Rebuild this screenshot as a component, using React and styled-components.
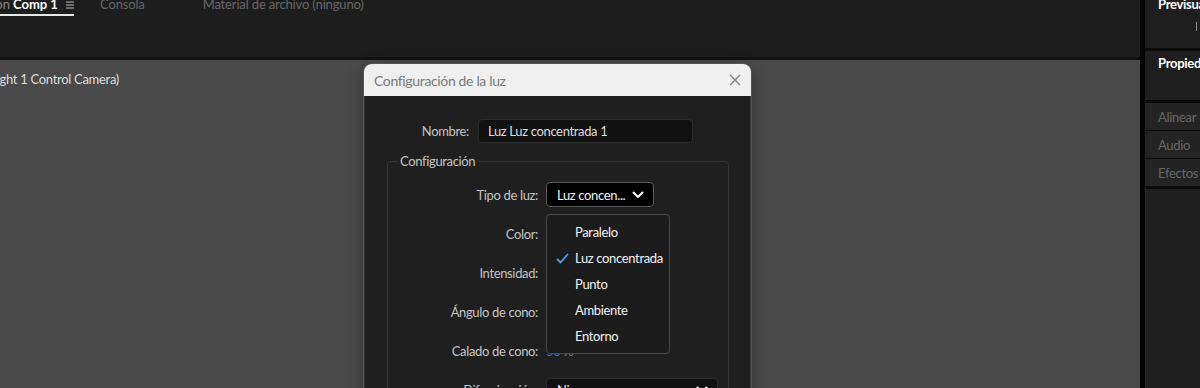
import React from "react";
import styled, { createGlobalStyle } from "styled-components";

const Global = createGlobalStyle`
  html, body {
    margin: 0;
    padding: 0;
    background: #000;
    overflow: hidden;
  }
  body {
    font-family: Lato, "Noto Sans", "Liberation Sans", sans-serif;
    font-size: 13px;
  }
`;

const Screen = styled.div`
  width: 1200px;
  height: 388px;
  display: grid;
  grid-template-columns: 1140px 5px 55px;
  background: #000;
  overflow: hidden;
`;

const MainColumn = styled.div`
  display: flex;
  flex-direction: column;
  min-width: 0;
`;

const TopPanel = styled.div`
  height: 57px;
  background: #1d1d1d;
  overflow: hidden;
`;

const TabRow = styled.div`
  display: flex;
  align-items: flex-start;
  margin-top: -4px;
  line-height: 16px;
`;

const ActiveTab = styled.div`
  display: flex;
  align-items: center;
  width: 74px;
  padding-bottom: 2px;
  border-bottom: 2px solid #e8e8e8;
`;

const Clip = styled.div`
  width: ${(p) => p.$w}px;
  overflow: hidden;
  display: flex;
  justify-content: flex-end;
  flex-shrink: 0;
  white-space: nowrap;
  color: ${(p) => p.$color || "#8a8a8a"};
`;

const TabName = styled.span`
  margin-left: 3px;
  font-weight: 700;
  color: #fff;
  white-space: nowrap;
`;

const Menu = styled.svg`
  margin-left: auto;
  margin-top: 2px;
`;

const Tab = styled.div`
  color: #666;
  white-space: nowrap;
  margin-left: ${(p) => p.$gap}px;
  letter-spacing: -0.15px;
`;

const Divider = styled.div`
  height: 3px;
  background: #121212;
`;

const Viewer = styled.div`
  flex: 1;
  background: #4a4a4a;
  position: relative;
  padding-top: 11px;
`;

const Gutter = styled.div`
  background: #050505;
`;

const SidePanel = styled.div`
  display: flex;
  flex-direction: column;
  background: #000;
  overflow: hidden;
  white-space: nowrap;
  letter-spacing: -0.3px;
`;

const SideSection = styled.div`
  height: ${(p) => p.$h}px;
  background: #1e1e1e;
  padding-left: 13px;
  position: relative;
  flex-shrink: 0;
`;

const SideTitle = styled.div`
  color: #fff;
  font-weight: 700;
  line-height: 16px;
  margin-top: ${(p) => p.$top}px;
`;

const SideBar = styled.div`
  width: 1px;
  height: 9px;
  background: #8a8a8a;
  margin: 10px 0 0 38px;
`;

const SideSep = styled.div`
  height: ${(p) => p.$h}px;
  background: #0a0a0a;
  flex-shrink: 0;
`;

const SideRow = styled.div`
  height: 27px;
  line-height: 28px;
  background: #242424;
  color: #666;
  padding-left: 13px;
  border-bottom: 1px solid #0c0c0c;
  flex-shrink: 0;
`;

const SideRest = styled.div`
  flex: 1;
  background: #1f1f1f;
  border-left: 1px solid #2a2a2a;
  border-top: 2px solid #0c0c0c;
`;

const ViewerTitle = styled(Clip)`
  color: #dcdcdc;
  line-height: 16px;
  letter-spacing: -0.3px;
`;

const Dialog = styled.div`
  position: absolute;
  left: 364px;
  top: 4px;
  width: 387px;
  bottom: -40px;
  display: flex;
  flex-direction: column;
  border-radius: 8px 8px 0 0;
  letter-spacing: -0.35px;
  box-shadow: 0 0 0 1px #555, 0 4px 16px rgba(0, 0, 0, 0.35);
`;

const DialogHeader = styled.div`
  height: 32px;
  background: #f0f0f0;
  border-radius: 8px 8px 0 0;
  display: flex;
  align-items: center;
  justify-content: space-between;
  padding: 0 10px;
  color: #7a7a7a;
  font-size: 14px;
`;

const DialogBody = styled.div`
  flex: 1;
  background: #1f1f1f;
  border-left: 1px solid #3a3a3a;
  border-right: 1px solid #3a3a3a;
  padding: 23px 21px 0 22px;
`;

const NameRow = styled.div`
  display: grid;
  grid-template-columns: 82px 215px;
  column-gap: 9px;
  align-items: center;
`;

const Label = styled.span`
  color: #c4c4c4;
  text-align: right;
  white-space: nowrap;
`;

const TextInput = styled.div`
  height: 24px;
  box-sizing: border-box;
  background: #111;
  border: 1px solid #2c2c2c;
  border-radius: 4px;
  color: #dcdcdc;
  padding-left: 9px;
  line-height: 22px;
`;

const Fieldset = styled.fieldset`
  margin: 10px 0 0 0;
  padding: 6px 0 0 0;
  border: 1px solid #343434;
  border-radius: 4px;
  min-width: 0;
`;

const Legend = styled.legend`
  margin-left: 9px;
  padding: 0 3px;
  color: #c4c4c4;
  line-height: 16px;
`;

const Grid = styled.div`
  display: grid;
  grid-template-columns: 150px 1fr;
  column-gap: 8px;
  grid-auto-rows: 39px;
  align-items: center;
`;

const SelectWrap = styled.div`
  position: relative;
`;

const Select = styled.div`
  width: ${(p) => p.$w}px;
  height: ${(p) => p.$h}px;
  box-sizing: border-box;
  background: ${(p) => p.$bg || "#000"};
  border: ${(p) => p.$border || "1.5px solid #5c5c5c"};
  border-radius: 4px;
  display: flex;
  align-items: center;
  justify-content: space-between;
  padding: 0 9px 0 10px;
  color: #f4f4f4;
`;

const Swatch = styled.div`
  width: 44px;
  height: 20px;
  background: #ffffff;
  border-radius: 3px;
`;

const Value = styled.span`
  color: #8a8a8a;
  span {
    color: #2f73c4;
  }
`;

const Dropdown = styled.ul`
  position: absolute;
  top: 32px;
  left: 0;
  width: 124px;
  box-sizing: border-box;
  margin: 0;
  padding: 4px 0;
  list-style: none;
  background: #1c1c1c;
  border: 1px solid #4a4a4a;
  border-radius: 4px;
  z-index: 2;
`;

const Item = styled.li`
  height: 26px;
  display: flex;
  align-items: center;
  padding-left: 9px;
  color: #f2f2f2;
  white-space: nowrap;
`;

const Check = styled.span`
  width: 19px;
  display: flex;
  align-items: center;
`;

const Chevron = () => (
  <svg width="12" height="8" viewBox="0 0 12 8">
    <path d="M1.5 1.5 L6 6 L10.5 1.5" fill="none" stroke="#fff" strokeWidth="2" strokeLinecap="round" strokeLinejoin="round" />
  </svg>
);

const lightTypes = ["Paralelo", "Luz concentrada", "Punto", "Ambiente", "Entorno"];

export default function App() {
  return (
    <>
      <Global />
      <Screen>
        <MainColumn>
          <TopPanel>
            <TabRow>
              <ActiveTab>
                <Clip $w={10}>Composición</Clip>
                <TabName>Comp 1</TabName>
                <Menu width="8" height="8" viewBox="0 0 8 8">
                  <path d="M0 1h8M0 4h8M0 7h8" stroke="#bbb" strokeWidth="1" />
                </Menu>
              </ActiveTab>
              <Tab $gap={26}>Consola</Tab>
              <Tab $gap={58}>Material de archivo (ninguno)</Tab>
            </TabRow>
          </TopPanel>
          <Divider />
          <Viewer>
            <ViewerTitle $w={119}>Composición: Comp 1 (Light 1 Control Camera)</ViewerTitle>
            <Dialog>
              <DialogHeader>
                <span>Configuración de la luz</span>
                <svg width="12" height="12" viewBox="0 0 12 12">
                  <path d="M1 1L11 11M11 1L1 11" stroke="#808080" strokeWidth="1.3" />
                </svg>
              </DialogHeader>
              <DialogBody>
                <NameRow>
                  <Label>Nombre:</Label>
                  <TextInput>Luz Luz concentrada 1</TextInput>
                </NameRow>
                <Fieldset>
                  <Legend>Configuración</Legend>
                  <Grid>
                    <Label>Tipo de luz:</Label>
                    <SelectWrap>
                      <Select $w={108} $h={25}>
                        <span>Luz concen...</span>
                        <Chevron />
                      </Select>
                      <Dropdown>
                        {lightTypes.map((t) => (
                          <Item key={t}>
                            <Check>
                              {t === "Luz concentrada" && (
                                <svg width="13" height="11" viewBox="0 0 13 11">
                                  <path d="M1 6 L4.5 9.5 L12 1" fill="none" stroke="#4b9cf0" strokeWidth="1.8" />
                                </svg>
                              )}
                            </Check>
                            {t}
                          </Item>
                        ))}
                      </Dropdown>
                    </SelectWrap>
                    <Label>Color:</Label>
                    <Swatch />
                    <Label>Intensidad:</Label>
                    <Value><span>100</span> %</Value>
                    <Label>Ángulo de cono:</Label>
                    <Value><span>90,0</span> °</Value>
                    <Label>Calado de cono:</Label>
                    <Value><span>50</span> %</Value>
                    <Label>Difuminación:</Label>
                    <Select $w={172} $h={24} $bg="#111" $border="1px solid #2c2c2c">
                      <span>Ninguno</span>
                      <Chevron />
                    </Select>
                  </Grid>
                </Fieldset>
              </DialogBody>
            </Dialog>
          </Viewer>
        </MainColumn>
        <Gutter />
        <SidePanel>
          <SideSection $h={48}>
            <SideTitle $top={-4}>Previsualización</SideTitle>
            <SideBar />
          </SideSection>
          <SideSep $h={3} />
          <SideSection $h={49}>
            <SideTitle $top={4}>Propiedades</SideTitle>
          </SideSection>
          <SideSep $h={3} />
          <SideRow>Alinear</SideRow>
          <SideRow>Audio</SideRow>
          <SideRow>Efectos y ajustes preestablecidos</SideRow>
          <SideRest />
        </SidePanel>
      </Screen>
    </>
  );
}
